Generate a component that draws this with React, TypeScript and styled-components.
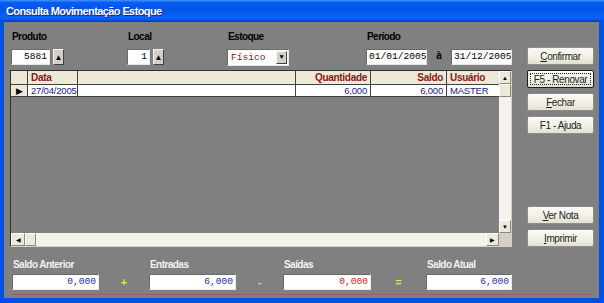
import React from 'react'
import styled, { createGlobalStyle } from 'styled-components'

const Global = createGlobalStyle`
  * { box-sizing: border-box; }
  html, body { margin: 0; padding: 0; background: #0050e6; }
  body { font-family: 'Liberation Sans', Arial, sans-serif; }
`

const Frame = styled.div`
  width: 604px;
  height: 303px;
  display: flex;
  flex-direction: column;
  background: #0050e6;
  padding: 0 5px 5px 4px;
  overflow: hidden;
`
const TitleBar = styled.div`
  height: 21px;
  margin: 0 -5px 0 -4px;
  padding-left: 6px;
  display: flex;
  align-items: center;
  background: linear-gradient(to bottom, #3d95ff 0%, #0a5cf0 12%, #0054e8 45%, #0a63f5 85%, #0048d8 100%);
  color: #fff;
  font-weight: bold;
  font-size: 11px;
  letter-spacing: -0.6px;
  text-shadow: 1px 1px 0 #0a2b8a;
`
const Body = styled.div`
  flex: 1;
  display: flex;
  flex-direction: column;
  background: #808080;
  padding: 8px 0 0 6px;
  border-top: 1px solid #1a3a9a;
`
const Upper = styled.div`
  display: flex;
`
const Main = styled.div`
  width: 502px;
  display: flex;
  flex-direction: column;
`
const Side = styled.div`
  width: 67px;
  margin-left: 15px;
  height: 217px;
  display: flex;
  flex-direction: column;
  padding-top: 17px;
  gap: 5px;
`
const Spacer = styled.div`
  flex: 1;
`
const Filters = styled.div`
  display: grid;
  grid-template-columns: 116px 100px 139px 1fr;
  height: 35px;
`
const Field = styled.div`
  display: flex;
  flex-direction: column;
  gap: 6px;
  padding-left: 1px;
`
const Label = styled.div<{ $light?: boolean }>`
  height: 13px;
  line-height: 13px;
  padding-left: 1px;
  font-size: 10px;
  font-weight: bold;
  letter-spacing: -0.55px;
  color: ${({ $light }) => ($light ? '#f2f2f2' : '#000')};
`
const InputRow = styled.div<{ $gap?: number }>`
  display: flex;
  align-items: center;
  gap: ${({ $gap }) => ($gap ?? 3)}px;
`
const TextBox = styled.div<{ $w: number; $color?: string; $align?: string }>`
  width: ${({ $w }) => $w}px;
  height: 16px;
  background: #fff;
  border-top: 1px solid #6a6a6a;
  border-left: 1px solid #6a6a6a;
  border-right: 1px solid #e8e8e8;
  border-bottom: 1px solid #e8e8e8;
  font-family: 'Liberation Mono', 'Courier New', monospace;
  font-size: 9.6px;
  line-height: 14px;
  padding: 0 2px;
  color: ${({ $color }) => $color || '#000'};
  text-align: ${({ $align }) => $align || 'left'};
  white-space: nowrap;
  overflow: hidden;
`
const SpinButton = styled.div`
  width: 11px;
  height: 16px;
  background: #d4d0c8;
  border: 1px solid;
  border-color: #f4f4f4 #404040 #404040 #f4f4f4;
  display: flex;
  align-items: center;
  justify-content: center;
  font-size: 8px;
  color: #000;
`
const Combo = styled.div`
  position: relative;
  width: 62px;
  height: 17px;
  background: #fff;
  border-top: 1px solid #6a6a6a;
  border-left: 1px solid #6a6a6a;
  border-right: 1px solid #e8e8e8;
  border-bottom: 1px solid #e8e8e8;
  font-family: 'Liberation Mono', 'Courier New', monospace;
  font-size: 9.6px;
  line-height: 15px;
  padding-left: 3px;
  color: #8b1010;
`
const DropButton = styled.div`
  position: absolute;
  right: 1px;
  top: 1px;
  bottom: 1px;
  width: 11px;
  background: #d4d0c8;
  border: 1px solid;
  border-color: #f4f4f4 #404040 #404040 #f4f4f4;
  display: flex;
  align-items: center;
  justify-content: center;
  font-size: 7px;
  color: #000;
`
const To = styled.div`
  width: 24px;
  text-align: center;
  color: #000;
  font-weight: bold;
  font-size: 10px;
  margin-top: -4px;
`
const Button = styled.div<{ $default?: boolean }>`
  height: 18px;
  flex: none;
  background: linear-gradient(to bottom, #fbfaf5 0%, #f1efe5 60%, #e3e0d0 100%);
  border: 1px solid ${({ $default }) => ($default ? '#1f1f1f' : '#8e8e86')};
  border-radius: 2px;
  display: flex;
  align-items: center;
  justify-content: center;
  font-size: 10px;
  letter-spacing: -0.4px;
  color: #222;
  position: relative;
  u { text-decoration: underline; }
`
const Focus = styled.span`
  position: absolute;
  inset: 2px;
  border: 1px dotted #222;
`
const Grid = styled.div`
  margin-top: 5px;
  height: 177px;
  display: flex;
  flex-direction: column;
  border: 1px solid;
  border-color: #303030 #d4d0c8 #d4d0c8 #303030;
`
const GridTop = styled.div`
  flex: 1;
  display: flex;
`
const Table = styled.div`
  flex: 1;
  display: flex;
  flex-direction: column;
  background: #808080;
`
const Row = styled.div<{ $head?: boolean }>`
  display: grid;
  grid-template-columns: 17px 50px 218px 75px 76px 52px;
  height: ${({ $head }) => ($head ? 14 : 12)}px;
  background: ${({ $head }) => ($head ? '#ece9d8' : '#fff')};
  border-bottom: 1px solid #404040;
`
const Cell = styled.div<{ $head?: boolean; $right?: boolean; $last?: boolean }>`
  border-right: ${({ $last }) => ($last ? 'none' : '1px solid #404040')};
  padding: 0 3px;
  font-size: ${({ $head }) => ($head ? 10 : 9.5)}px;
  font-weight: ${({ $head }) => ($head ? 'bold' : 'normal')};
  letter-spacing: ${({ $head }) => ($head ? -0.3 : -0.2)}px;
  line-height: ${({ $head }) => ($head ? 13 : 11)}px;
  color: ${({ $head }) => ($head ? '#8b1515' : '#202080')};
  text-align: ${({ $right }) => ($right ? 'right' : 'left')};
  white-space: nowrap;
  overflow: hidden;
`
const Indicator = styled.div`
  border-right: 1px solid #404040;
  background: #ece9d8;
  display: flex;
  align-items: center;
  justify-content: center;
  font-size: 9px;
  color: #000;
`
const VScroll = styled.div`
  width: 12px;
  display: flex;
  flex-direction: column;
  background: #f4f2ea;
`
const ScrollButton = styled.div<{ $w?: number }>`
  width: ${({ $w }) => ($w ? `${$w}px` : '100%')};
  height: 13px;
  background: #ece9d8;
  border: 1px solid;
  border-color: #fff #8a8a80 #8a8a80 #fff;
  display: flex;
  align-items: center;
  justify-content: center;
  font-size: 6px;
  color: #000;
  flex: none;
`
const Track = styled.div`
  flex: 1;
`
const HScroll = styled.div`
  height: 13px;
  display: flex;
  background: #f4f2ea;
`
const Corner = styled.div`
  width: 12px;
  background: #d4d0c8;
`
const Totals = styled.div`
  margin-top: 11px;
  padding-left: 2px;
  display: flex;
  align-items: flex-end;
`
const TotalField = styled.div`
  display: flex;
  flex-direction: column;
  gap: 3px;
`
const Operator = styled.div<{ $w: number }>`
  width: ${({ $w }) => $w}px;
  height: 16px;
  text-align: center;
  font-weight: bold;
  font-size: 11px;
  line-height: 16px;
  color: #e6e63a;
`
const RedLine = styled.div`
  margin-top: 4px;
  width: 578px;
  margin-left: 2px;
  height: 1px;
  background: #9a6060;
`

const totals = [
  { label: 'Saldo Anterior', value: '0,000', w: 87, color: '#2a2aa0', op: '+', opW: 50 },
  { label: 'Entradas', value: '6,000', w: 87, color: '#2a2aa0', op: '-', opW: 47 },
  { label: 'Saídas', value: '0,000', w: 88, color: '#d02020', op: '=', opW: 55 },
  { label: 'Saldo Atual', value: '6,000', w: 86, color: '#2a2aa0', op: '', opW: 0 }
]

export default function App() {
  return (
    <>
      <Global />
      <Frame>
        <TitleBar>Consulta Movimentação Estoque</TitleBar>
        <Body>
          <Upper>
            <Main>
              <Filters>
                <Field>
                  <Label>Produto</Label>
                  <InputRow>
                    <TextBox $w={39} $align="right">5881</TextBox>
                    <SpinButton>▲</SpinButton>
                  </InputRow>
                </Field>
                <Field>
                  <Label>Local</Label>
                  <InputRow>
                    <TextBox $w={23} $align="right">1</TextBox>
                    <SpinButton>▲</SpinButton>
                  </InputRow>
                </Field>
                <Field>
                  <Label>Estoque</Label>
                  <InputRow>
                    <Combo>
                      Físico
                      <DropButton>▼</DropButton>
                    </Combo>
                  </InputRow>
                </Field>
                <Field>
                  <Label>Período</Label>
                  <InputRow $gap={0}>
                    <TextBox $w={61}>01/01/2005</TextBox>
                    <To>à</To>
                    <TextBox $w={61}>31/12/2005</TextBox>
                  </InputRow>
                </Field>
              </Filters>
              <Grid>
                <GridTop>
                  <Table>
                    <Row $head>
                      <Indicator />
                      <Cell $head>Data</Cell>
                      <Cell $head />
                      <Cell $head $right>Quantidade</Cell>
                      <Cell $head $right>Saldo</Cell>
                      <Cell $head $last>Usuário</Cell>
                    </Row>
                    <Row>
                      <Indicator>▶</Indicator>
                      <Cell>27/04/2005</Cell>
                      <Cell />
                      <Cell $right>6,000</Cell>
                      <Cell $right>6,000</Cell>
                      <Cell $last>MASTER</Cell>
                    </Row>
                  </Table>
                  <VScroll>
                    <ScrollButton>▲</ScrollButton>
                    <ScrollButton />
                    <Track />
                    <ScrollButton>▼</ScrollButton>
                  </VScroll>
                </GridTop>
                <HScroll>
                  <ScrollButton $w={14}>◀</ScrollButton>
                  <ScrollButton $w={11} />
                  <Track />
                  <ScrollButton $w={13}>▶</ScrollButton>
                  <Corner />
                </HScroll>
              </Grid>
            </Main>
            <Side>
              <Button><span><u>C</u>onfirmar</span></Button>
              <Button $default>
                <Focus />
                <span>F5 - Renovar</span>
              </Button>
              <Button><span><u>F</u>echar</span></Button>
              <Button><span>F1 - Ajuda</span></Button>
              <Spacer />
              <Button><span><u>V</u>er Nota</span></Button>
              <Button><span><u>I</u>mprimir</span></Button>
            </Side>
          </Upper>
          <Totals>
            {totals.map((t) => (
              <React.Fragment key={t.label}>
                <TotalField>
                  <Label $light>{t.label}</Label>
                  <TextBox $w={t.w} $color={t.color} $align="right">
                    {t.value}
                  </TextBox>
                </TotalField>
                {t.op && <Operator $w={t.opW}>{t.op}</Operator>}
              </React.Fragment>
            ))}
          </Totals>
          <RedLine />
        </Body>
      </Frame>
    </>
  )
}
